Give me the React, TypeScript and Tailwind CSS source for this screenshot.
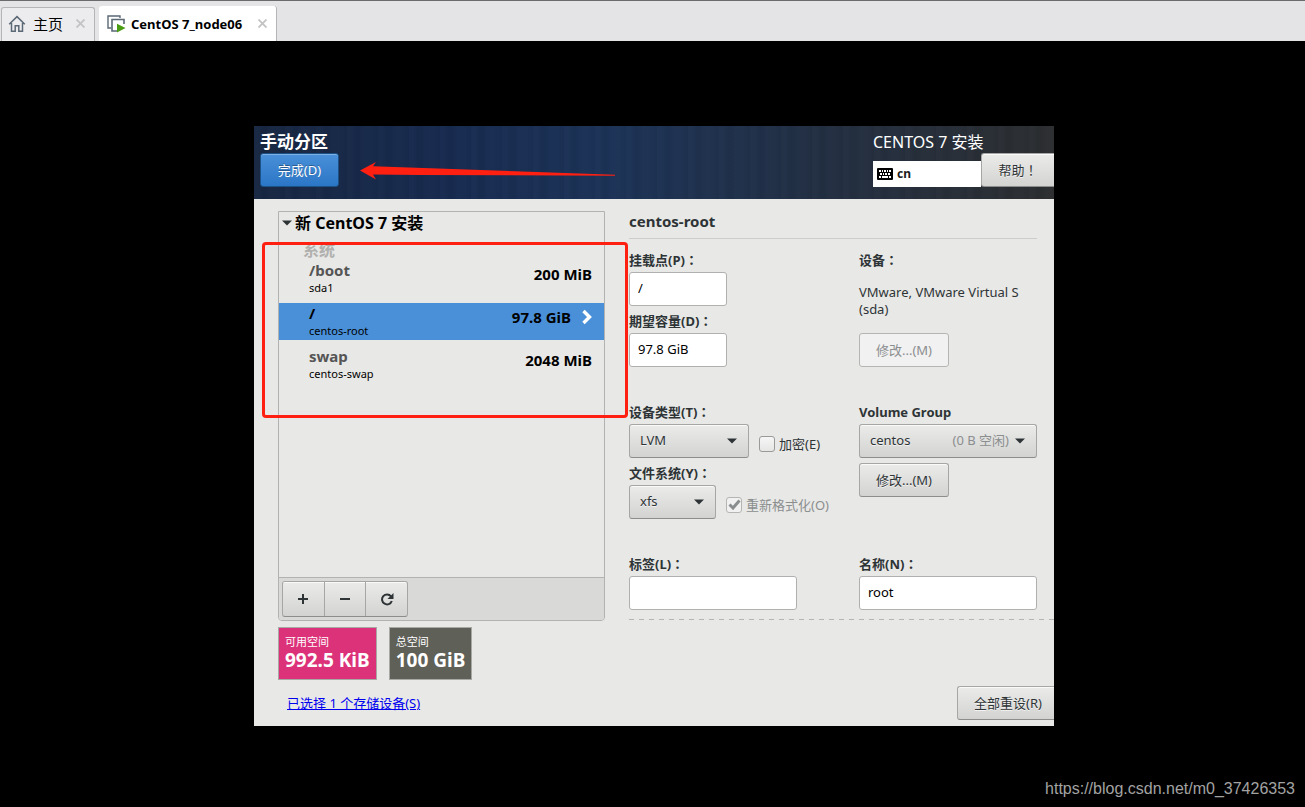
import type { ReactNode } from "react";

const btn =
  "rounded-[3px] border border-[#a6a6a4] border-b-[#8d8d8b] bg-linear-to-b from-[#ebebea] to-[#d3d3d1] text-[13px] leading-5 text-[#2e3436] shadow-[inset_0_1px_#fafafa] [text-shadow:0_1px_#ffffffb0]";
const field =
  "h-[34px] w-full rounded-[3px] border border-[#b0b0ae] bg-white px-2 pb-[2px] text-[13px] leading-5 text-black outline-none";
const label =
  "flex h-[27px] items-center pt-[2px] text-[13px] font-bold leading-5 text-[#2e3436]";

function Home() {
  return (
    <svg width="18" height="18" viewBox="0 0 18 18" fill="none" stroke="#5b6875" strokeWidth="1.5" aria-hidden="true">
      <path d="M1.2 9.3 9 1.6l7.8 7.7M3.5 8v8.2h3.7v-5.4h3.6v5.4h3.7V8" />
    </svg>
  );
}

function Machine() {
  return (
    <svg width="19" height="18" viewBox="0 0 19 18" fill="none" aria-hidden="true">
      <path d="M4 13H1V1h12v2" stroke="#5b6875" strokeWidth="1.4" />
      <path d="M10 16H5V4.500h12V9" stroke="#5b6875" strokeWidth="1.6" />
      <path d="M10 8.800 18.500 13 10 17.500Z" fill="#4a9d12" />
    </svg>
  );
}

function Close() {
  return (
    <svg width="9" height="9" viewBox="0 0 9 9" stroke="#c3c3c3" strokeWidth="1.8" aria-hidden="true">
      <path d="m.5.5 8 8m0-8-8 8" />
    </svg>
  );
}

function Keyboard() {
  return (
    <svg width="16" height="12" viewBox="0 0 16 12" aria-hidden="true">
      <rect width="16" height="12" rx="1" fill="#000" />
      <path
        d="M2 2h2v2H2zM5 2h1v2H5zM7 2h2v2H7zM10 2h1v2h-1zM12 2h2v2h-2zM3 5h2v2H3zM6 5h1v2H6zM8 5h2v2H8zM11 5h2v2h-2zM2 8h2v2H2zM5 8h6v2H5zM12 8h2v2h-2z"
        fill="#fff"
      />
    </svg>
  );
}

function Caret() {
  return (
    <svg width="10" height="6" viewBox="0 0 10 6" aria-hidden="true">
      <path d="M0 .5h10L5 5.500Z" fill="#2e3436" />
    </svg>
  );
}

/* Full-width punctuation centred in its square */
function Mark({ children }: { children: string }) {
  return <span className="font-['Noto_Sans_CJK_TC',sans-serif]">{children}</span>;
}

function Dropdown({ id, value, note }: { id: string; value: string; note?: string }) {
  return (
    <div className="relative">
      <select id={id} className={`${btn} h-[34px] w-full appearance-none pb-[2px] pl-[10px] pr-8 outline-none`}>
        <option>{value}</option>
      </select>
      <span className="pointer-events-none absolute inset-y-0 right-3 flex items-center gap-[6px] text-[13px] text-[#8b8e8f]">
        {note}
        <Caret />
      </span>
    </div>
  );
}

function Volume({
  mount,
  device,
  size,
  selected,
}: {
  mount: string;
  device: string;
  size: string;
  selected?: boolean;
}) {
  return (
    <button
      className={`flex w-full items-start justify-between pl-[30px] pr-3 text-left ${
        selected ? "h-[37px] bg-[#4a90d9] text-black" : "h-[43px] text-[#555]"
      }`}
    >
      <span className="flex flex-col">
        <span className="text-[15px] font-bold leading-5">{mount}</span>
        <span className="text-[11px] leading-4 text-black">{device}</span>
      </span>
      <span className="flex items-center gap-[11px] pt-1 text-[15px] font-bold leading-5 text-black">
        {size}
        {selected && (
          <svg width="10" height="16" viewBox="0 0 10 16" fill="none" stroke="#fff" strokeWidth="3.4" aria-hidden="true">
            <path d="m1.500 2 6 6-6 6" />
          </svg>
        )}
      </span>
    </button>
  );
}

function Tool({ name, children }: { name: string; children: ReactNode }) {
  return (
    <button
      aria-label={name}
      className="flex flex-1 items-center justify-center border-r border-[#a6a6a4] shadow-[inset_0_1px_#fafafa] last:border-r-0"
    >
      <svg width="14" height="14" viewBox="0 0 14 14" fill="none" stroke="#2e3436" strokeWidth="2" aria-hidden="true">
        {children}
      </svg>
    </button>
  );
}

function Space({ title, size, tone }: { title: string; size: string; tone: string }) {
  return (
    <div className={`h-[53px] border border-[#a8a8a5] px-[6px] pt-[6px] text-white ${tone}`}>
      <div className="text-[11px] leading-4">{title}</div>
      <div className="text-[19px] font-bold leading-5">{size}</div>
    </div>
  );
}

export default function App() {
  return (
    <div className="relative flex min-h-screen flex-col bg-black font-['Noto_Sans','Noto_Sans_CJK_SC',sans-serif]">
      <nav className="flex h-[41px] items-end gap-1 border-t border-[#6b6b6e] bg-[#e4e4e6] pl-px text-black">
        <div className="flex h-[34px] w-[94px] items-center rounded-t-[3px] border border-b-0 border-[#b5b5b8] bg-[#ececee] pb-[2px] pl-[6px]">
          <a href="#home" className="flex flex-1 items-center gap-[7px] text-[15px] leading-5">
            <Home />
            主页
          </a>
          <button aria-label="关闭 主页" className="mr-[9px]">
            <Close />
          </button>
        </div>
        <div className="flex h-[35px] w-[178px] items-center rounded-t-[3px] border-r border-[#b5b5b8] bg-white pl-2">
          <a href="#node06" className="flex flex-1 items-center gap-[5px] whitespace-nowrap text-[13px] font-bold leading-5">
            <Machine />
            CentOS 7_node06
          </a>
          <button aria-label="关闭 CentOS 7_node06" className="mr-[9px]">
            <Close />
          </button>
        </div>
      </nav>

      <main className="flex justify-center pb-[81px] pl-[3px] pt-[85px]">
        <div className="relative w-full max-w-[800px] bg-[#e8e8e6]">
          <header className="flex h-[73px] justify-between overflow-hidden bg-[repeating-linear-gradient(90deg,#ffffff03_0_4px,#00000008_9px_12px,#ffffff02_17px_23px,#00000006_31px),linear-gradient(90deg,#182742,#172b50_25%,#1c3357_45%,#222f43_70%,#2c2e30)]">
            <div className="pl-[6px] pt-[6px]">
              <h1 className="h-[21px] text-[17px] font-bold leading-5 text-white">手动分区</h1>
              <button className="h-[34px] w-[79px] rounded-[3px] border border-[#1c5187] bg-linear-to-b from-[#4a90d9] to-[#2a76c6] pb-px text-[13px] leading-5 text-white shadow-[inset_0_1px_#7db1e6] [text-shadow:0_-1px_#00000050]">
                完成(D)
              </button>
            </div>
            <div className="w-[181px] pt-[6px]">
              <div className="h-[21px] text-[16px] leading-5 text-white">CENTOS 7 安装</div>
              <div className="flex items-end">
                <button className="flex h-[26px] flex-1 items-center gap-1 bg-white pl-1 text-[12px] font-bold leading-5 text-[#1a1a1a]">
                  <Keyboard />
                  cn
                </button>
                <button className={`${btn} h-[34px] w-[73px] rounded-r-none border-r-0`}>
                  帮助<Mark>！</Mark>
                </button>
              </div>
            </div>
          </header>

          <div className="flex gap-6 pl-6">
            <section className="w-[327px] shrink-0 pt-3">
              <div className="flex h-[410px] flex-col overflow-hidden rounded-b-[4px] border border-[#b2b2b0]">
                <div className="flex-1">
                  <h2 className="flex h-[22px] items-center gap-[3px] pl-[3px] text-[16px] font-bold leading-5 text-black">
                    <Caret />
                    新 CentOS 7 安装
                  </h2>
                  <div className="flex h-[26px] items-center pl-6 pt-[6px] text-[16px] font-bold leading-5 text-[#b0b0ae]">系统</div>
                  <Volume mount="/boot" device="sda1" size="200 MiB" />
                  <Volume mount="/" device="centos-root" size="97.8 GiB" selected />
                  <div className="pt-[6px]">
                    <Volume mount="swap" device="centos-swap" size="2048 MiB" />
                  </div>
                </div>
                <div className="flex h-[43px] items-center border-t border-[#b2b2b0] bg-[#d9d9d7] pl-[3px]">
                  <div className="flex h-9 w-[126px] overflow-hidden rounded-[3px] border border-[#a6a6a4] border-b-[#8d8d8b] bg-linear-to-b from-[#ebebea] to-[#d3d3d1]">
                    <Tool name="添加">
                      <path d="M7 2v10M2 7h10" />
                    </Tool>
                    <Tool name="删除">
                      <path d="M2 7h10" />
                    </Tool>
                    <Tool name="刷新">
                      <path d="M11 4.300A5 5 0 1 0 11.800 9" />
                      <path d="M13.500 1v6h-6Z" fill="#2e3436" stroke="none" />
                    </Tool>
                  </div>
                </div>
              </div>
              <div className="mt-[6px] flex gap-3">
                <Space title="可用空间" size="992.5 KiB" tone="bg-[#dc3279]" />
                <Space title="总空间" size="100 GiB" tone="bg-[#5f6058]" />
              </div>
              <a href="#disks" className="ml-[9px] mt-[13px] inline-block text-[13px] leading-5 text-[#0000ee] underline">
                已选择 1 个存储设备(S)
              </a>
            </section>

            <section className="flex min-w-0 flex-1 flex-col pb-[6px] pt-3">
              <h2 className="mr-[17px] h-7 border-b border-[#cdcdcb] text-[15px] font-bold leading-5 text-[#2e3436]">
                centos-root
              </h2>
              <div className="mr-[17px] mt-[6px] grid grid-cols-[168px_1fr] gap-x-[62px] gap-y-[30px]">
                <div>
                  <label htmlFor="mount" className={label}>挂载点(P)<Mark>：</Mark></label>
                  <div className="w-[98px]">
                    <input id="mount" defaultValue="/" className={field} />
                  </div>
                  <label htmlFor="capacity" className={label}>期望容量(D)<Mark>：</Mark></label>
                  <div className="w-[98px]">
                    <input id="capacity" defaultValue="97.8 GiB" className={field} />
                  </div>
                </div>
                <div className="flex flex-col items-start">
                  <div className={label}>设备<Mark>：</Mark></div>
                  <p className="mt-3 text-[13px] leading-[17px] text-[#2e3436]">
                    VMware, VMware Virtual S<br />
                    (sda)
                  </p>
                  <button disabled className="mt-auto h-[34px] w-[90px] rounded-[3px] border border-[#b5b5b3] bg-[#f1f1f1] text-[13px] leading-5 text-[#8b8e8f]">
                    修改...(M)
                  </button>
                </div>
                <div>
                  <label htmlFor="type" className={label}>设备类型(T)<Mark>：</Mark></label>
                  <div className="flex items-center gap-[10px]">
                    <div className="w-[120px] shrink-0">
                      <Dropdown id="type" value="LVM" />
                    </div>
                    <label className="flex items-center gap-1 whitespace-nowrap pt-[5px] text-[13px] leading-5 text-[#2e3436]">
                      <input type="checkbox" className="size-4 appearance-none rounded-[3px] border border-[#9a9a98] bg-linear-to-b from-[#f6f6f6] to-[#e6e6e5]" />
                      加密(E)
                    </label>
                  </div>
                  <label htmlFor="fs" className={label}>文件系统(Y)<Mark>：</Mark></label>
                  <div className="flex items-center gap-[10px]">
                    <div className="w-[87px] shrink-0">
                      <Dropdown id="fs" value="xfs" />
                    </div>
                    <label className="flex items-center gap-1 whitespace-nowrap pt-[5px] text-[13px] leading-5 text-[#8b8e8f]">
                      <span className="relative flex">
                        <input type="checkbox" defaultChecked disabled className="size-4 appearance-none rounded-[3px] border border-[#b5b5b3] bg-[#f1f1f1]" />
                        <svg className="absolute inset-0" width="16" height="16" viewBox="0 0 16 16" fill="none" stroke="#8b8e8f" strokeWidth="3" aria-hidden="true">
                          <path d="m3.500 7.500 3.500 3.500 6.500-7.500" />
                        </svg>
                      </span>
                      重新格式化(O)
                    </label>
                  </div>
                </div>
                <div>
                  <label htmlFor="group" className={label}>Volume Group</label>
                  <Dropdown id="group" value="centos" note="(0 B 空闲)" />
                  <button className={`${btn} mt-[5px] h-[34px] w-[90px]`}>修改...(M)</button>
                </div>
                <div>
                  <label htmlFor="tag" className={label}>标签(L)<Mark>：</Mark></label>
                  <input id="tag" defaultValue="" className={field} />
                </div>
                <div>
                  <label htmlFor="name" className={label}>名称(N)<Mark>：</Mark></label>
                  <input id="name" defaultValue="root" className={field} />
                </div>
              </div>
              <div className="mt-[9px] h-px bg-[repeating-linear-gradient(90deg,#b5b5b3_0_5px,transparent_5px_10px)]" />
              <button className={`${btn} mt-[66px] h-[34px] w-[97px] self-end rounded-r-none border-r-0 pl-1`}>
                全部重设(R)
              </button>
            </section>
          </div>

          <div className="pointer-events-none absolute left-2 top-[116px] h-[176px] w-[366px] rounded-[4px] border-3 border-[#ff2012]" />
          <svg className="pointer-events-none absolute left-[106px] top-[35px]" width="256" height="20" viewBox="0 0 256 20" aria-hidden="true">
            <path d="M0 9.500 16 1l-3 4.200L255 13.800v1L60 14 13 13.500 16 18.500Z" fill="#ff2012" />
          </svg>
        </div>
      </main>

      <div className="absolute bottom-2 right-[10px] font-['Liberation_Sans',sans-serif] text-[16px] leading-5 text-[#a3a3a3]">
        https://blog.csdn.net/m0_37426353
      </div>
    </div>
  );
}
